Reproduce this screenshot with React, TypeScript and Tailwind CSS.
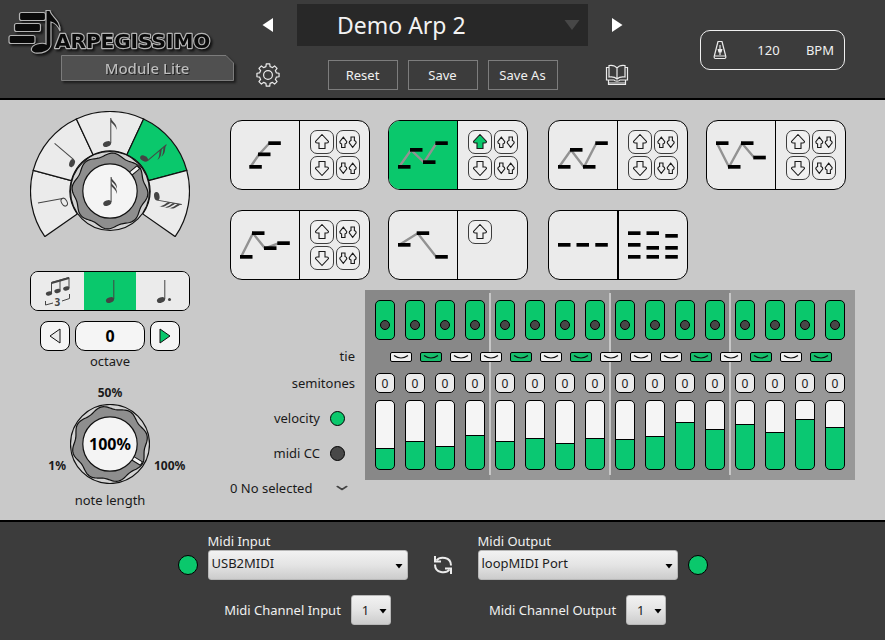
import { ReactNode, useState } from "react";
import { ChevronDown } from "lucide-react";

const GREEN = "#0ac86c";
const INK = "#444444";

function polar(r: number, deg: number): [number, number] {
  const a = (deg * Math.PI) / 180;
  return [r * Math.sin(a), -r * Math.cos(a)];
}

function sectorPath(from: number, to: number, inner: number, outer: number) {
  const [ax, ay] = polar(inner, from);
  const [bx, by] = polar(outer, from);
  const [cx, cy] = polar(outer, to);
  const [dx, dy] = polar(inner, to);
  return `M${ax} ${ay}L${bx} ${by}A${outer} ${outer} 0 0 1 ${cx} ${cy}L${dx} ${dy}A${inner} ${inner} 0 0 0 ${ax} ${ay}Z`;
}

function wavePath() {
  let d = "";
  for (let i = 0; i < 180; i++) {
    const deg = i * 2;
    const [x, y] = polar(36.4 + 1.6 * Math.cos((deg * 8 * Math.PI) / 180), deg);
    d += `${i ? "L" : "M"}${x.toFixed(2)} ${y.toFixed(2)}`;
  }
  return d + "Z";
}

function gearPath() {
  let d = "";
  for (let i = 0; i < 8; i++) {
    const a = i * 45;
    const points = [polar(8.6, a - 14), polar(11.2, a - 9), polar(11.2, a + 9), polar(8.6, a + 14)];
    points.forEach(([x, y], j) => {
      const cmd = i === 0 && j === 0 ? "M" : j === 0 ? "A8.6 8.6 0 0 1 " : "L";
      d += `${cmd}${x.toFixed(2)} ${y.toFixed(2)}`;
    });
  }
  return d + "Z";
}

function Note({ flags = 0, hollow = false, stem = 26 }: { flags?: number; hollow?: boolean; stem?: number }) {
  return (
    <g>
      <ellipse
        rx="4.2"
        ry="2.7"
        transform="rotate(-20)"
        fill={hollow ? "none" : INK}
        stroke={INK}
        strokeWidth={hollow ? 1 : 0}
      />
      <path d={`M3.8 -1V${-stem}`} stroke={INK} strokeWidth="1" />
      {Array.from({ length: flags }, (_, i) => (
        <path
          key={i}
          transform={`translate(3.8 ${-stem + i * 5})`}
          d="M0 0C1 4 6.500 5 5.800 12C5 8 2 6 0 4Z"
          fill={INK}
        />
      ))}
    </g>
  );
}

function KnobFace({ angle }: { angle: number }) {
  return (
    <g>
      <circle r="39.5" fill="#d2d2d2" stroke="#111" strokeWidth="1.2" />
      <g transform={`rotate(${angle})`}>
        <path d={wavePath()} fill="#8e8e8e" stroke="#111" strokeWidth="1.2" />
        <rect x="-2" y="-37" width="4" height="11" fill="#f4f4f4" stroke="#111" strokeWidth="1" />
      </g>
      <circle r="27.2" fill="#f4f4f4" stroke="#111" strokeWidth="1.2" />
    </g>
  );
}

function Logo() {
  return (
    <svg width="240" height="88" viewBox="0 0 240 88" role="img" aria-label="Arpegissimo Module Lite">
      <g className="drop-shadow-[2px_2px_1px_#111111]">
        <g fill="#0a0a0a" stroke="#b4b4b4" strokeWidth="1.2">
          <rect x="19.500" y="12.500" width="26" height="8" rx="2" />
          <rect x="14.500" y="23.500" width="26" height="8" rx="2" />
          <rect x="9" y="35.500" width="26" height="8" rx="2" />
          <path d="M46 10.500L50 10.500C51 17 61 20 60 31C58 26 55 23 51 22L51 45C50 51 42 54 35 53C29 51 31 46 37 44C41 43 44 43 46 44Z" />
        </g>
        <text
          x="55"
          y="48"
          fill="#0a0a0a"
          stroke="#b4b4b4"
          strokeWidth="2.400"
          paintOrder="stroke"
          strokeLinejoin="round"
          className="font-['DejaVu_Sans',sans-serif] text-[20px] font-bold"
        >
          ARPEGISSIMO
        </text>
      </g>
      <g className="drop-shadow-[2px_2px_1px_#1c1c1c]">
        <path d="M61.500 55.500H226L233.500 63V80.500H61.500Z" fill="#505050" stroke="#7c7c7c" />
      </g>
      <text x="147" y="74" textAnchor="middle" fill="#bcbcbc" className="text-[15px] font-medium drop-shadow-[1px_1px_0px_#222222]">
        Module Lite
      </text>
    </svg>
  );
}

function BookIcon() {
  return (
    <svg width="24" height="22" viewBox="0 0 24 22" fill="none" stroke="#ececec" strokeWidth="1.2">
      <path d="M12 4C10 1.500 7 1 4 1.500V13C7 12.500 10 13 12 15C14 13 17 12.500 20 13V1.500C17 1 14 1.500 12 4V15" />
      <path d="M4 3.500H1.500V16H9C10 17.500 14 17.500 15 16H22.500V3.500H20" />
      <path d="M3.500 16V20.500H20.500V16M3.500 19H20.500" />
    </svg>
  );
}

function MetronomeIcon() {
  return (
    <svg width="14" height="20" viewBox="0 0 14 20" fill="none" stroke="#ececec" strokeWidth="1.2">
      <path d="M5 1.500H9L12.800 16.500Q13 18.500 11.500 18.500H2.500Q1 18.500 1.200 16.500Z" strokeLinejoin="round" />
      <path d="M2 16H12M7 5V15" />
      <path d="M4.500 9H9.500L8.500 12.500H5.500Z" fill="#ececec" stroke="none" />
    </svg>
  );
}

function RescanIcon() {
  return (
    <svg width="20" height="20" viewBox="0 0 20 20" fill="none" stroke="#ececec" strokeWidth="2">
      <path d="M3.500 5.500C7 1 18 1.500 18 10.500" />
      <path d="M16.500 14.500C13 19 2 18.500 2 9.500" />
      <path d="M2 1V6.500H8M18 19V13.500H12" />
    </svg>
  );
}

type Arrow = "up" | "down" | "updown" | "downup";

const BIG_ARROW = "M0 -7.500L6.500 -0.500Q6.500 1 5 1H3V6.500H-3V1H-5Q-6.500 1 -6.500 -0.500Z";
const SMALL_ARROW = "M0 -5.300L3.500 -0.800Q3.600 1 1.700 1.500V5H-1.700V1.500Q-3.600 1 -3.500 -0.800Z";

function ArrowButton({ kind, active }: { kind: Arrow; active?: boolean }) {
  return (
    <button
      type="button"
      aria-label={kind}
      aria-pressed={!!active}
      className="flex size-6 items-center justify-center rounded-[7px] border border-[#3c3c3c] bg-[#f0f0f0]"
    >
      <svg width="22" height="22" viewBox="-11 -11 22 22" className="shrink-0" fill={active ? GREEN : "none"} stroke="#1a1a1a" strokeWidth="1.1">
        {kind === "up" && <path d={BIG_ARROW} />}
        {kind === "down" && <path d={BIG_ARROW} transform="rotate(180)" />}
        {kind === "updown" && (
          <>
            <path d={SMALL_ARROW} transform="translate(-4.700 .5)" />
            <path d={SMALL_ARROW} transform="translate(4.700 0) rotate(180)" />
          </>
        )}
        {kind === "downup" && (
          <>
            <path d={SMALL_ARROW} transform="translate(-4.700 0) rotate(180)" />
            <path d={SMALL_ARROW} transform="translate(4.700 .5)" />
          </>
        )}
      </svg>
    </button>
  );
}

type Point = [number, number];

function Pattern({ bars, line = true }: { bars: Point[]; line?: boolean }) {
  const path = bars.map(([x, y], i) => `${i ? "L" : "M"}${x + 1} ${y + 2}`).join("");
  return (
    <svg width="68" height="68" viewBox="1 1 68 68" className="shrink-0">
      {line && <path d={path} fill="none" stroke="#929292" strokeWidth="2.400" />}
      {bars.map(([x, y]) => (
        <rect key={`${x}-${y}`} x={x} y={y} width="12.500" height="3.700" fill="#000" />
      ))}
    </svg>
  );
}

const ALL: Arrow[] = ["up", "updown", "down", "downup"];

function PatternCard({ name, bars, arrows = ALL, active }: { name: string; bars: Point[]; arrows?: Arrow[]; active?: boolean }) {
  return (
    <div className="flex h-[70px] w-[140px] overflow-hidden rounded-xl border border-black bg-[#ebebeb]">
      <button
        type="button"
        aria-label={name}
        aria-pressed={!!active}
        className={`flex w-[69px] shrink-0 border-r border-black ${active ? "bg-[#0ac86c]" : ""}`}
      >
        <Pattern bars={bars} />
      </button>
      <div className="grid grid-cols-[24px_24px] content-start gap-0.5 py-[9px] pl-2.5">
        {arrows.map((a) => (
          <ArrowButton key={a} kind={a} active={active && a === "up"} />
        ))}
      </div>
    </div>
  );
}

function ChordCard() {
  return (
    <div className="flex h-[70px] w-[140px] overflow-hidden rounded-xl border border-black bg-[#ebebeb]">
      <button type="button" aria-label="Repeat" className="flex w-[70px] shrink-0 border-r-2 border-black">
        <Pattern line={false} bars={[[10, 33], [28.5, 33], [47.3, 33]]} />
      </button>
      <button type="button" aria-label="Chord" className="flex">
        <Pattern
          line={false}
          bars={[[10, 21.3], [28.5, 21.3], [47.3, 24], [10, 33], [28.5, 36], [47.3, 36], [10, 45], [28.5, 45], [47.3, 45]]}
        />
      </button>
    </div>
  );
}

function RateDial() {
  const notes = [
    { hollow: true, flags: 0 },
    { hollow: false, flags: 0 },
    { hollow: false, flags: 1 },
    { hollow: false, flags: 2 },
    { hollow: false, flags: 3 },
  ];
  return (
    <div className="relative">
      <svg width="160" height="126" viewBox="-80 -80 160 126" className="block">
        {notes.map((n, i) => {
          const mid = -100 + i * 50;
          return (
            <g key={mid}>
              <path
                d={sectorPath(mid - 25, mid + 25, 40, 79.5)}
                fill={i === 3 ? GREEN : "#ebebeb"}
                stroke="#111"
                strokeWidth="1.2"
              />
              <g transform={`rotate(${mid}) translate(-3 -47)`}>
                <Note {...n} />
              </g>
            </g>
          );
        })}
        <KnobFace angle={50} />
        <g transform="translate(-2.700 12)">
          <Note flags={2} />
        </g>
      </svg>
      <input
        type="range"
        aria-label="note rate"
        min={0}
        max={4}
        defaultValue={3}
        className="absolute top-10 left-10 h-20 w-20 cursor-pointer opacity-0"
      />
    </div>
  );
}

function Segment({ label, active, children }: { label: string; active?: boolean; children: ReactNode }) {
  return (
    <button
      type="button"
      aria-label={label}
      aria-pressed={!!active}
      className={`flex flex-1 items-center justify-center ${active ? "bg-[#0ac86c]" : "bg-[#ebebeb]"}`}
    >
      <svg width="52" height="38" viewBox="0 0 52 38">{children}</svg>
    </button>
  );
}

const PANEL_VALUES = [
  [22, 29, 24, 35],
  [29, 32, 27, 32],
  [31, 34, 48, 41],
  [46, 38, 51, 43],
];
const TIES = [
  [false, true, false, false],
  [true, false, true, false],
  [false, false, true, false],
  [true, false, true],
];
const GROUP_STYLES = [
  "bg-[#888888] w-[125px] pl-[5px]",
  "bg-[#989898] w-[120px]",
  "bg-[#888888] w-[120px]",
  "bg-[#989898] w-[125px] pr-[5px]",
];

function StepGroup({ index }: { index: number }) {
  const steps = PANEL_VALUES[index];
  return (
    <div className={`relative py-2.5 ${GROUP_STYLES[index]}`}>
      {index > 0 && <span className="absolute top-[3px] bottom-[5px] -left-px w-0.5 bg-[#c6c6c6]" />}
      <div className="flex gap-2.5 px-[5px]">
        {steps.map((_, i) => (
          <button
            key={i}
            type="button"
            aria-label={`step ${index * 4 + i + 1}`}
            aria-pressed="true"
            className="flex h-10 w-5 shrink-0 justify-center rounded-[5px] border border-black bg-[#0ac86c] pt-[19px]"
          >
            <span className="size-2.5 rounded-full border border-black bg-[#484848]" />
          </button>
        ))}
      </div>
      <div className="relative z-10 mt-3 flex gap-2 pl-5">
        {TIES[index].map((on, i) => (
          <button
            key={i}
            type="button"
            aria-label={`tie ${index * 4 + i + 1}`}
            aria-pressed={on}
            className={`flex h-2.5 w-[22px] shrink-0 items-center justify-center rounded-[2px] border border-black ${on ? "bg-[#17bd6c]" : "bg-[#f0f0f0]"}`}
          >
            <svg width="16" height="6" viewBox="0 0 16 6" className="shrink-0">
              <path d="M1 1.500Q8 6.500 15 1.500" fill="none" stroke="#111" strokeWidth="1.200" />
            </svg>
          </button>
        ))}
      </div>
      <div className="mt-[11px] flex gap-2.5 px-[5px]">
        {steps.map((_, i) => (
          <input
            key={i}
            aria-label={`semitones ${index * 4 + i + 1}`}
            defaultValue="0"
            className="size-5 shrink-0 rounded-[5px] border border-black bg-[#ebebeb] text-center text-[12px] leading-[18px]"
          />
        ))}
      </div>
      <div className="mt-[7px] flex gap-2.5 px-[5px]">
        {steps.map((h, i) => (
          <input
            key={i}
            type="range"
            min={0}
            max={70}
            defaultValue={h}
            aria-label={`velocity ${index * 4 + i + 1}`}
            className="m-0 h-[70px] w-5 shrink-0 appearance-none rounded-[5px] border border-black [direction:rtl] [writing-mode:vertical-lr] [&::-webkit-slider-thumb]:appearance-none [&::-webkit-slider-thumb]:opacity-0"
            style={{
              background: `linear-gradient(to top, #0ac872 ${h - 2}px, #000 ${h - 2}px, #000 ${h - 1}px, #f5f5f5 ${h - 1}px)`,
            }}
          />
        ))}
      </div>
    </div>
  );
}

function ComboBox({ id, value, small }: { id: string; value: string; small?: boolean }) {
  return (
    <div className={`relative ${small ? "w-10" : "w-[200px]"}`}>
      <select
        id={id}
        className={`block h-[30px] w-full appearance-none rounded-[3px] border border-[#b8b8b8] bg-linear-to-b from-[#f2f2f2] from-0% via-[#e4e4e4] via-50% to-[#cccccc] text-[13px] text-[#1c1c1c] ${small ? "pl-2.5" : "pb-1 pl-[3px]"}`}
      >
        <option>{value}</option>
      </select>
      <svg width="8" height="5" viewBox="0 0 8 5" className={`pointer-events-none absolute top-[14px] ${small ? "right-1" : "right-[5px]"}`}>
        <path d="M0.500 0H7.500L4 4.500Z" fill="#000" />
      </svg>
    </div>
  );
}

function MidiPort({ side, port }: { side: "Input" | "Output"; port: string }) {
  return (
    <div className="flex flex-col items-center">
      <div>
        <label htmlFor={`port-${side}`} className="block leading-[18px]">
          Midi {side}
        </label>
        <ComboBox id={`port-${side}`} value={port} />
      </div>
      <div className="mt-[15px] flex items-center gap-2.5">
        <label htmlFor={`channel-${side}`}>Midi Channel {side}</label>
        <ComboBox id={`channel-${side}`} value="1" small />
      </div>
    </div>
  );
}

function Lamp() {
  return <span className="mt-[23px] size-5 shrink-0 rounded-full border border-black bg-[#0ac86c]" />;
}

const TOOL_BUTTON = "h-[30px] w-[70px] border border-[#7d7d7d] text-[#f0f0f0]";

export default function App() {
  const [target, setTarget] = useState("velocity");

  return (
    <div className="flex min-h-screen w-full flex-col bg-[#c9c9c9] font-['Noto_Sans','Open_Sans',sans-serif] text-[13px] leading-5 text-[#1a1a1a]">
      <header className="grid grid-cols-[1fr_auto_1fr] border-b-2 border-black bg-[#3c3c3c] text-[#f0f0f0]">
        <Logo />
        <div className="flex gap-[17px] pt-1 pb-2">
          <div className="flex w-6 flex-col items-center">
            <button type="button" aria-label="Previous preset" className="mt-3.5 h-3.5">
              <svg width="12" height="14" viewBox="0 0 12 14"><path d="M11 0V14L0.500 7Z" fill="#fff" /></svg>
            </button>
            <button type="button" aria-label="Settings" className="mt-[31px] h-6">
              <svg width="24" height="24" viewBox="-12 -12 24 24" fill="none" stroke="#ececec" strokeWidth="1.200" strokeLinejoin="round">
                <path d={gearPath()} />
                <circle r="4.400" />
              </svg>
            </button>
          </div>
          <div className="w-[291px]">
            <div className="relative">
              <select
                aria-label="Preset"
                className="block h-[42px] w-full appearance-none bg-[#282828] pl-10 text-[23px] leading-9 text-[#f2f2f2]"
              >
                <option>Demo Arp 2</option>
              </select>
              <svg width="16" height="10" viewBox="0 0 16 10" className="pointer-events-none absolute top-4 right-2">
                <path d="M0.500 0H15.500L8 10Z" fill="#474747" />
              </svg>
            </div>
            <div className="mt-3.5 flex justify-center gap-2.5">
              <button type="button" className={TOOL_BUTTON}>Reset</button>
              <button type="button" className={TOOL_BUTTON}>Save</button>
              <button type="button" className={TOOL_BUTTON}>Save As</button>
            </div>
          </div>
          <div className="flex w-6 flex-col items-center">
            <button type="button" aria-label="Next preset" className="mt-3.5 h-3.5">
              <svg width="12" height="14" viewBox="0 0 12 14"><path d="M1 0V14L11.500 7Z" fill="#fff" /></svg>
            </button>
            <button type="button" aria-label="Manual" className="mt-[31px] h-6">
              <BookIcon />
            </button>
          </div>
        </div>
        <div className="mt-[30px] mr-10 flex h-10 w-[145px] items-center justify-between justify-self-end rounded-[10px] border border-[#f0f0f0] pr-2.5 pl-3">
          <MetronomeIcon />
          <input id="bpm" defaultValue="120" className="ml-1 w-[26px] bg-transparent text-center" />
          <label htmlFor="bpm">BPM</label>
        </div>
      </header>

      <main className="flex grow justify-center gap-10 px-[30px]">
        <section className="flex w-40 shrink-0 flex-col items-center pt-[11px]">
          <RateDial />
          <div className="mt-[34px] flex h-10 w-full overflow-hidden rounded-lg border border-black">
            <Segment label="Triplet">
              <g stroke={INK} fill="none">
                <path d="M20.500 21V10.500L38 5.500V16M29 18.500V8" />
                <path d="M20.500 11L38 6" strokeWidth="2" />
                <path d="M14.500 29V33L22 31M31 29L38.500 26.500V22" />
              </g>
              <g fill={INK}>
                <ellipse cx="18" cy="21.500" rx="3.200" ry="2" transform="rotate(-15 18 21.500)" />
                <ellipse cx="26.500" cy="19" rx="3.200" ry="2" transform="rotate(-15 26.500 19)" />
                <ellipse cx="35.300" cy="16.500" rx="3.200" ry="2" transform="rotate(-15 35.300 16.500)" />
              </g>
              <text x="23.500" y="34" fill={INK} className="text-[10px] font-bold">3</text>
            </Segment>
            <Segment label="Straight" active>
              <g transform="translate(26 28)"><Note stem={20} /></g>
            </Segment>
            <Segment label="Dotted">
              <g transform="translate(24 28)">
                <Note stem={20} />
                <circle cx="8.500" cy="-0.500" r="1.500" fill={INK} />
              </g>
            </Segment>
          </div>
          <div className="mt-2.5 flex gap-[5px]">
            <button type="button" aria-label="Octave down" className="flex size-[30px] items-center justify-center rounded-lg border border-black bg-[#f5f5f5]">
              <svg width="12" height="16" viewBox="0 0 12 16"><path d="M11 1V15L1 8Z" fill="#ececec" stroke="#111" /></svg>
            </button>
            <input id="octave" defaultValue="0" className="h-[30px] w-[70px] rounded-[10px] border border-black bg-[#f5f5f5] text-center text-[16px] font-bold text-black" />
            <button type="button" aria-label="Octave up" className="flex size-[30px] items-center justify-center rounded-lg border border-black bg-[#f5f5f5]">
              <svg width="12" height="16" viewBox="0 0 12 16"><path d="M1 1V15L11 8Z" fill={GREEN} stroke="#111" /></svg>
            </button>
          </div>
          <label htmlFor="octave">octave</label>
          <span className="mt-3 text-[12px] leading-5 font-bold">50%</span>
          <div className="mt-px grid w-full grid-cols-[40px_80px_40px] text-[12px] leading-5 font-bold">
            <span className="pt-[52px] pr-1 text-right">1%</span>
            <div className="relative flex h-20 items-center justify-center">
              <svg width="80" height="80" viewBox="-40 -40 80 80" className="absolute inset-0">
                <KnobFace angle={122} />
              </svg>
              <span className="relative text-[16px] text-black">100%</span>
              <input id="length" type="range" min={1} max={100} defaultValue={100} className="absolute inset-0 cursor-pointer opacity-0" />
            </div>
            <span className="pt-[52px] pl-1">100%</span>
          </div>
          <label htmlFor="length" className="mt-1.5">note length</label>
        </section>

        <section className="w-[625px] shrink-0 pt-5">
          <div className="flex gap-5">
            <div className="flex gap-[18px]">
              <PatternCard name="Up" bars={[[19.3, 45], [28, 32.5], [38.3, 21.3]]} />
              <PatternCard name="Stagger" active bars={[[10, 45], [22, 28], [35, 40.3], [47.3, 21.3]]} />
            </div>
            <div className="flex gap-[18px]">
              <PatternCard name="Return" bars={[[10, 45], [22, 28], [35, 45], [47.3, 21.3]]} />
              <PatternCard name="Valley" bars={[[10, 21.3], [22, 45], [35, 21.3], [47.3, 35.7]]} />
            </div>
          </div>
          <div className="mt-5 flex gap-5">
            <div className="flex gap-[18px]">
              <PatternCard name="Peak" bars={[[10, 45], [22, 21.3], [34, 36.3], [47.3, 31.3]]} />
              <PatternCard name="Hill" arrows={["up"]} bars={[[10, 33], [28.7, 21.3], [47.3, 45]]} />
            </div>
            <ChordCard />
          </div>

          <div className="mt-2.5 flex">
            <div className="flex w-[135px] flex-col items-end pt-14">
              <span className="pr-2.5">tie</span>
              <span className="mt-[7px] pr-2.5">semitones</span>
              {[
                ["velocity", "velocity"],
                ["cc", "midi CC"],
              ].map(([id, text]) => (
                <div key={id} className="mt-[15px] flex items-center gap-2.5 pr-5">
                  <label htmlFor={id}>{text}</label>
                  <input
                    id={id}
                    type="radio"
                    name="target"
                    checked={target === id}
                    onChange={() => setTarget(id)}
                    className="size-[15px] appearance-none rounded-full border border-black bg-[#484848] checked:bg-[#0ac86c]"
                  />
                </div>
              ))}
              <div className="relative mt-[15px] w-full pr-3.5">
                <select aria-label="CC number" className="block h-5 w-full appearance-none bg-transparent text-[13px]">
                  <option>0 No selected</option>
                </select>
                <ChevronDown
                  strokeWidth={3}
                  preserveAspectRatio="none"
                  className="pointer-events-none absolute top-1 right-3.5 h-3 w-[18px] text-[#444444]"
                />
              </div>
            </div>
            <div className="flex h-[190px]">
              {PANEL_VALUES.map((_, i) => (
                <StepGroup key={i} index={i} />
              ))}
            </div>
          </div>
        </section>
      </main>

      <footer className="flex justify-center border-t-2 border-black bg-[#3c3c3c] pt-2.5 pb-[15px] text-[#f0f0f0]">
        <div className="flex items-start gap-[25px]">
          <div className="flex gap-2.5">
            <Lamp />
            <MidiPort side="Input" port="USB2MIDI" />
          </div>
          <button type="button" aria-label="Rescan ports" className="mt-[23px]">
            <RescanIcon />
          </button>
          <div className="flex gap-2.5">
            <MidiPort side="Output" port="loopMIDI Port" />
            <Lamp />
          </div>
        </div>
      </footer>
    </div>
  );
}
